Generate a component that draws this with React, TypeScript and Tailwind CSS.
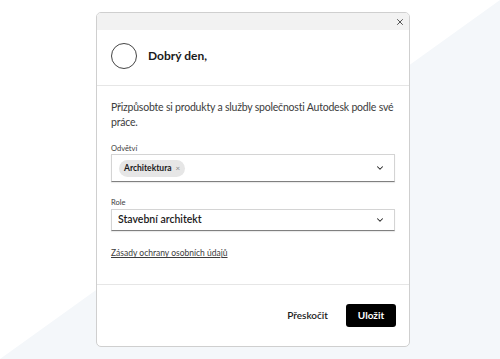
import { X, ChevronDown } from "lucide-react";

export default function App() {
  return (
    <div className="relative w-[500px] h-[359px] overflow-hidden bg-white font-['Lato',sans-serif] text-[#1a1a1a]">
      <div className="absolute inset-0 bg-[#f4f7fa] [clip-path:polygon(100%_0,100%_100%,0_100%)]" />

      <div className="relative ml-[96px] mt-[12px] w-[314px] h-[335px] bg-white border border-[#cfcfcf] rounded-[5px] overflow-hidden flex flex-col">
        <div className="h-[17px] bg-[#f2f2f2] flex justify-end items-center pr-[4px]">
          <X className="w-[10px] h-[10px] text-[#333]" strokeWidth={2} />
        </div>

        <div className="h-[56px] flex items-center gap-[11px] px-[14px] pb-[3px] border-b border-[#e6e6e6]">
          <div className="w-[26px] h-[26px] rounded-full border border-[#444]" />
          <span className="text-[12px] font-bold">Dobrý den,</span>
        </div>

        <div className="flex-1 px-[14px] pt-[14px]">
          <p className="text-[10.5px] leading-[15px] tracking-[-0.2px] text-[#3c3c3c]">
            Přizpůsobte si produkty a služby společnosti Autodesk podle své práce.
          </p>

          <div className="mt-[14px] text-[7.5px] leading-[10px] text-[#3c3c3c]">Odvětví</div>
          <div className="mt-0 h-[28px] border border-[#d4d4d4] border-b-[#808080] flex items-center justify-between pl-[7px] pr-[9px] shadow-[0_1px_1px_rgba(0,0,0,0.08)]">
            <span className="h-[17px] px-[5px] rounded-full bg-[#e6e6e6] flex items-center gap-[4px]">
              <span className="text-[8.5px] font-bold">Architektura</span>
              <span className="text-[8px] text-[#888]">×</span>
            </span>
            <ChevronDown className="w-[10px] h-[10px] text-[#222]" strokeWidth={2.5} />
          </div>

          <div className="mt-[16px] text-[7.5px] leading-[10px] text-[#3c3c3c]">Role</div>
          <div className="mt-[1px] h-[22px] border border-[#d4d4d4] border-b-[#808080] flex items-center justify-between pl-[6px] pr-[9px] shadow-[0_1px_1px_rgba(0,0,0,0.08)]">
            <span className="text-[10.5px] font-semibold">Stavební architekt</span>
            <ChevronDown className="w-[10px] h-[10px] text-[#222]" strokeWidth={2.5} />
          </div>

          <a className="block mt-[16px] text-[8.5px] leading-[12px] text-[#3c3c3c] underline">Zásady ochrany osobních údajů</a>
        </div>

        <div className="h-[62px] border-t border-[#e6e6e6] flex items-center justify-end gap-[18px] pr-[13px]">
          <span className="text-[10px] font-semibold">Přeskočit</span>
          <button className="w-[50px] h-[23px] bg-black text-white rounded-[3px] text-[10px] font-bold">Uložit</button>
        </div>
      </div>
    </div>
  );
}
